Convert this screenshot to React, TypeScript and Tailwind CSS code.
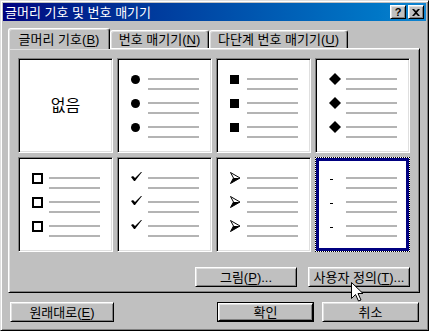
import React from 'react';

const FONT = "font-['Liberation_Sans','Noto_Sans_CJK_KR',sans-serif]";
const LINE = 'h-[2px] w-[51px] bg-[#b4b4b4]';
const RAISED =
  'border border-t-white border-l-white border-r-black border-b-black shadow-[inset_1px_1px_#dfdfdf,inset_-1px_-1px_#808080]';

const Bullet = () => <div className="h-[9px] w-[9px] rounded-full bg-black" />;
const Square = () => <div className="h-[9px] w-[9px] bg-black" />;
const Hollow = () => <div className="h-[11px] w-[11px] border-2 border-black" />;
const Diamond = () => (
  <svg width="12" height="12" viewBox="0 0 12 12">
    <polygon points="6,0 12,6 6,12 0,6" fill="#000" />
  </svg>
);
const Check = () => (
  <svg width="11" height="10" viewBox="0 0 11 10" className="-mt-[3px]">
    <polygon points="0,5 2,4 4,6 10,0 11,0 4,9 3,9" fill="#000" />
  </svg>
);
const Arrow = () => (
  <svg width="11" height="12" viewBox="0 0 11 12">
    <polygon points="0.5,0.5 10,6 0.5,11.5 3.5,6" fill="#fff" stroke="#000" strokeWidth="1" />
    <polygon points="3.5,6 10,6 0.5,11.5" fill="#000" />
  </svg>
);
const Dash = () => <div className="ml-[1px] mt-[2px] h-[1px] w-[3px] bg-black" />;

function Row({ marker }: { marker: React.ReactNode }) {
  return (
    <div className="flex h-[24px]">
      <div className="flex h-[2px] w-[17px] items-center">{marker}</div>
      <div className="flex flex-col gap-[8px]">
        <div className={LINE} />
        <div className={LINE} />
      </div>
    </div>
  );
}

function Cell({ marker, selected }: { marker?: React.ReactNode; selected?: boolean }) {
  const frame = selected
    ? 'border border-dotted border-black shadow-[inset_0_0_0_3px_#000080]'
    : 'border border-t-[#808080] border-l-[#808080] border-b-white border-r-white shadow-[inset_1px_1px_#000,inset_-1px_-1px_#dfdfdf]';
  if (!marker) {
    return (
      <div className={`flex h-[95px] w-[95px] items-center justify-center bg-white ${frame}`}>
        <span className="text-[16px] leading-none text-black">없음</span>
      </div>
    );
  }
  return (
    <div className={`h-[95px] w-[95px] bg-white pl-[13px] pt-[19px] ${frame}`}>
      <Row marker={marker} />
      <Row marker={marker} />
      <Row marker={marker} />
    </div>
  );
}

function Button({
  label,
  hot,
  rest,
  width,
  isDefault,
}: {
  label: string;
  hot?: string;
  rest?: string;
  width: string;
  isDefault?: boolean;
}) {
  const inner = (
    <div className={`flex h-full w-full items-center justify-center text-[13px] leading-none text-black ${RAISED}`}>
      <span>
        {label}
        {hot && (
          <>
            (<span className="underline underline-offset-2">{hot}</span>){rest}
          </>
        )}
      </span>
    </div>
  );
  if (isDefault) {
    return <div className={`h-[20px] border border-black ${width}`}>{inner}</div>;
  }
  return <div className={`h-[20px] ${width}`}>{inner}</div>;
}

function Tab({ label, hot, active, width }: { label: string; hot: string; active?: boolean; width: string }) {
  return (
    <div
      className={`flex items-center justify-center rounded-t-[3px] border border-b-0 border-t-white border-l-white border-r-black bg-[#c0c0c0] text-[13px] leading-none text-black shadow-[inset_-1px_0_#808080,inset_1px_1px_#dfdfdf] ${width} ${
        active ? 'relative z-10 -mb-px h-[21px]' : 'mt-[2px] h-[18px]'
      }`}
    >
      <span>
        {label}(<span className="underline underline-offset-2">{hot}</span>)
      </span>
    </div>
  );
}

export default function App() {
  return (
    <div
      className={`relative flex h-[331px] w-[429px] flex-col bg-[#c0c0c0] p-[2px] ${FONT} border border-t-[#dfdfdf] border-l-[#dfdfdf] border-r-black border-b-black shadow-[inset_1px_1px_#fff,inset_-1px_-1px_#808080]`}
    >
      {/* title bar */}
      <div className="flex h-[18px] items-center justify-between bg-linear-to-r from-[#000080] to-[#1084d0] pl-[2px] pr-[2px]">
        <span className="text-[13px] leading-none text-white">글머리 기호 및 번호 매기기</span>
        <div className="flex gap-[2px]">
          <div className={`flex h-[14px] w-[16px] items-center justify-center bg-[#c0c0c0] text-[11px] font-bold leading-none text-black ${RAISED}`}>
            ?
          </div>
          <div className={`flex h-[14px] w-[16px] items-center justify-center bg-[#c0c0c0] ${RAISED}`}>
            <svg width="8" height="7" viewBox="0 0 8 7">
              <path d="M0 0h2l2 2 2-2h2L5 3.5 8 7H6L4 5 2 7H0l3-3.5z" fill="#000" />
            </svg>
          </div>
        </div>
      </div>

      {/* tabs */}
      <div className="ml-[5px] mt-[7px] flex items-start">
        <Tab label="글머리 기호" hot="B" active width="w-[102px]" />
        <Tab label="번호 매기기" hot="N" width="w-[99px]" />
        <Tab label="다단계 번호 매기기" hot="U" width="w-[139px]" />
      </div>

      {/* panel */}
      <div className={`ml-[5px] flex h-[245px] w-[412px] flex-col pl-[9px] pr-[9px] pt-[9px] ${RAISED}`}>
        <div className="grid grid-cols-[repeat(4,95px)] gap-[4px]">
          <Cell />
          <Cell marker={<Bullet />} />
          <Cell marker={<Square />} />
          <Cell marker={<Diamond />} />
          <Cell marker={<Hollow />} />
          <Cell marker={<Check />} />
          <Cell marker={<Arrow />} />
          <Cell marker={<Dash />} selected />
        </div>
        <div className="mt-[15px] flex justify-end gap-[11px]">
          <Button label="그림" hot="P" rest="..." width="w-[102px]" />
          <Button label="사용자 정의" hot="T" rest="..." width="w-[102px]" />
        </div>
      </div>

      {/* bottom buttons */}
      <div className="mt-[9px] flex items-center pl-[7px]">
        <Button label="원래대로" hot="E" width="w-[104px]" />
        <div className="ml-auto mr-[7px] flex gap-[8px]">
          <Button label="확인" width="w-[97px]" isDefault />
          <Button label="취소" width="w-[97px]" />
        </div>
      </div>

      {/* mouse pointer */}
      <svg className="absolute left-[350px] top-[281px]" width="13" height="20" viewBox="0 0 13 20">
        <path d="M0.5 0.5V16.5L4.5 12.5L7.5 19L10 18L7 11.5H12Z" fill="#fff" stroke="#000" strokeWidth="1" />
      </svg>
    </div>
  );
}
